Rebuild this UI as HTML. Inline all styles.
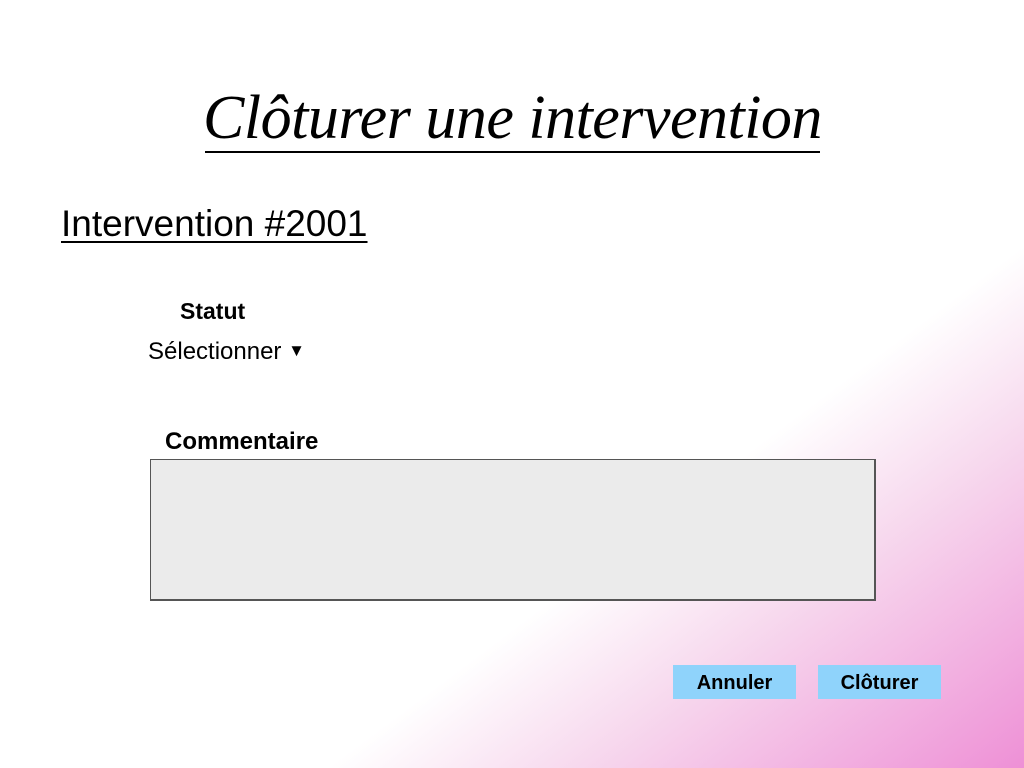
<!DOCTYPE html>
<html><head><meta charset="utf-8"><style>
html,body{margin:0;padding:0}
body{width:1024px;height:768px;position:relative;overflow:hidden;font-family:"Liberation Sans",sans-serif;
background:linear-gradient(to bottom right,#fff 0%,#fff 66%,#f7d9ee 78%,#ee90d6 100%);}
.a{position:absolute;white-space:nowrap}
h1{position:absolute;left:195px;top:78px;width:635px;margin:0;font:italic 62px "Liberation Serif",serif;text-align:center;line-height:80px;white-space:nowrap;letter-spacing:-0.5px}
.ul{position:absolute;left:205px;top:151px;width:615px;height:2px;background:#000}
.btn{position:absolute;top:665px;width:123px;height:34px;background:#8fd3fb;font-weight:bold;font-size:20px;text-align:center;line-height:36px}
</style></head><body>
<h1>Clôturer une intervention</h1>
<div class="ul"></div>
<div class="a" style="left:61px;top:203px;font-size:37px;text-decoration:underline;text-underline-offset:5px;text-decoration-thickness:2px">Intervention #2001</div>
<div class="a" style="left:180px;top:298px;font-size:23px;font-weight:bold">Statut</div>
<div class="a" style="left:148px;top:338px;font-size:24px">Sélectionner <span style="font-size:17px;position:relative;top:-3px">▼</span></div>
<div class="a" style="left:165px;top:428px;font-size:24px;font-weight:bold">Commentaire</div>
<div class="a" style="left:150px;top:459px;width:723px;height:139px;background:#ebebeb;border:1px solid #555;border-right-width:2px;border-bottom-width:2px"></div>
<div class="btn" style="left:673px">Annuler</div>
<div class="btn" style="left:818px">Clôturer</div>
</body></html>
